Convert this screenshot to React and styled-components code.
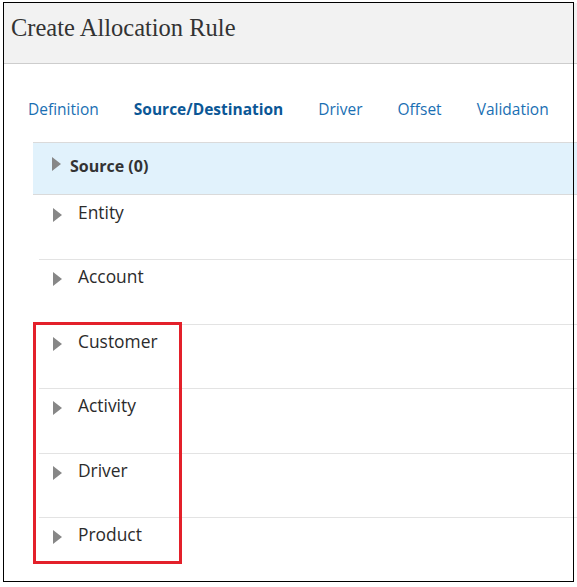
import React from 'react';
import styled, { createGlobalStyle } from 'styled-components';

const GlobalStyle = createGlobalStyle`
  html, body {
    margin: 0;
    padding: 0;
    background: #fff;
  }
  body {
    font-family: 'Open Sans', 'Noto Sans', sans-serif;
  }
`;

const Page = styled.div`
  position: relative;
  width: 577px;
  height: 587px;
  padding: 3px 0 0 4px;
  box-sizing: border-box;
  overflow: hidden;
`;

const Frame = styled.div`
  position: absolute;
  left: 3px;
  top: 2px;
  width: 571px;
  height: 580px;
  box-sizing: border-box;
  border: 1px solid #000;
  pointer-events: none;
  z-index: 2;
`;

const Highlight = styled.div`
  position: absolute;
  left: 33px;
  top: 322px;
  width: 149px;
  height: 242px;
  box-sizing: border-box;
  border: 3px solid #e3202a;
  pointer-events: none;
  z-index: 2;
`;

const Header = styled.div`
  height: 49px;
  padding: 11px 0 0 7px;
  background: #f2f2f2;
  border-bottom: 1px solid #cdcdcd;
`;

const Title = styled.h1`
  margin: 0;
  font-family: 'Liberation Serif', 'Times New Roman', serif;
  font-weight: normal;
  font-size: 24.5px;
  color: #333;
`;

const Tabs = styled.nav`
  display: flex;
  align-items: baseline;
  gap: 35px;
  padding: 35px 0 0 24px;
  height: 43px;
`;

const Tab = styled.a`
  font-size: 15.5px;
  line-height: 20px;
  color: ${p => (p.$active ? '#0b5796' : '#1a6fb3')};
  font-weight: ${p => (p.$active ? 700 : 400)};
  text-decoration: none;
  cursor: pointer;
`;

const SourceBar = styled.div`
  display: flex;
  align-items: flex-start;
  margin-left: 29px;
  height: 38px;
  padding: 13px 0 0 19px;
  background: #e1f2fc;
  border-top: 1px solid #dadada;
  border-bottom: 1px solid #dadada;
`;

const SourceLabel = styled.span`
  margin-left: 9px;
  font-size: 16px;
  line-height: 20px;
  font-weight: 700;
  color: #333;
`;

const List = styled.div`
  margin-left: 35px;
`;

const Row = styled.div`
  display: flex;
  align-items: flex-start;
  height: 59.5px;
  padding: 4px 0 0 14px;
  border-top: 1px solid #e3e3e3;

  &:first-child {
    border-top: none;
    height: 59px;
    padding-top: 5px;
  }
`;

const RowLabel = styled.span`
  margin-left: 16px;
  font-size: 17.4px;
  line-height: 24px;
  color: #2b2b2b;
`;

const Caret = styled.svg`
  flex: none;
  display: block;
  margin-top: ${p => p.$top}px;
`;

const Arrow = ({ top }) => (
  <Caret $top={top} width="9" height="14" viewBox="0 0 9 14">
    <polygon points="0,0 9,7 0,14" fill="#878787" />
  </Caret>
);

const tabs = ['Definition', 'Source/Destination', 'Driver', 'Offset', 'Validation'];
const dimensions = ['Entity', 'Account', 'Customer', 'Activity', 'Driver', 'Product'];

export default function App() {
  return (
    <Page>
      <GlobalStyle />
      <Header>
        <Title>Create Allocation Rule</Title>
      </Header>
      <Tabs>
        {tabs.map(t => (
          <Tab key={t} $active={t === 'Source/Destination'}>{t}</Tab>
        ))}
      </Tabs>
      <SourceBar>
        <Arrow top={1} />
        <SourceLabel>Source (0)</SourceLabel>
      </SourceBar>
      <List>
        {dimensions.map(d => (
          <Row key={d}>
            <Arrow top={8} />
            <RowLabel>{d}</RowLabel>
          </Row>
        ))}
      </List>
      <Highlight />
      <Frame />
    </Page>
  );
}
